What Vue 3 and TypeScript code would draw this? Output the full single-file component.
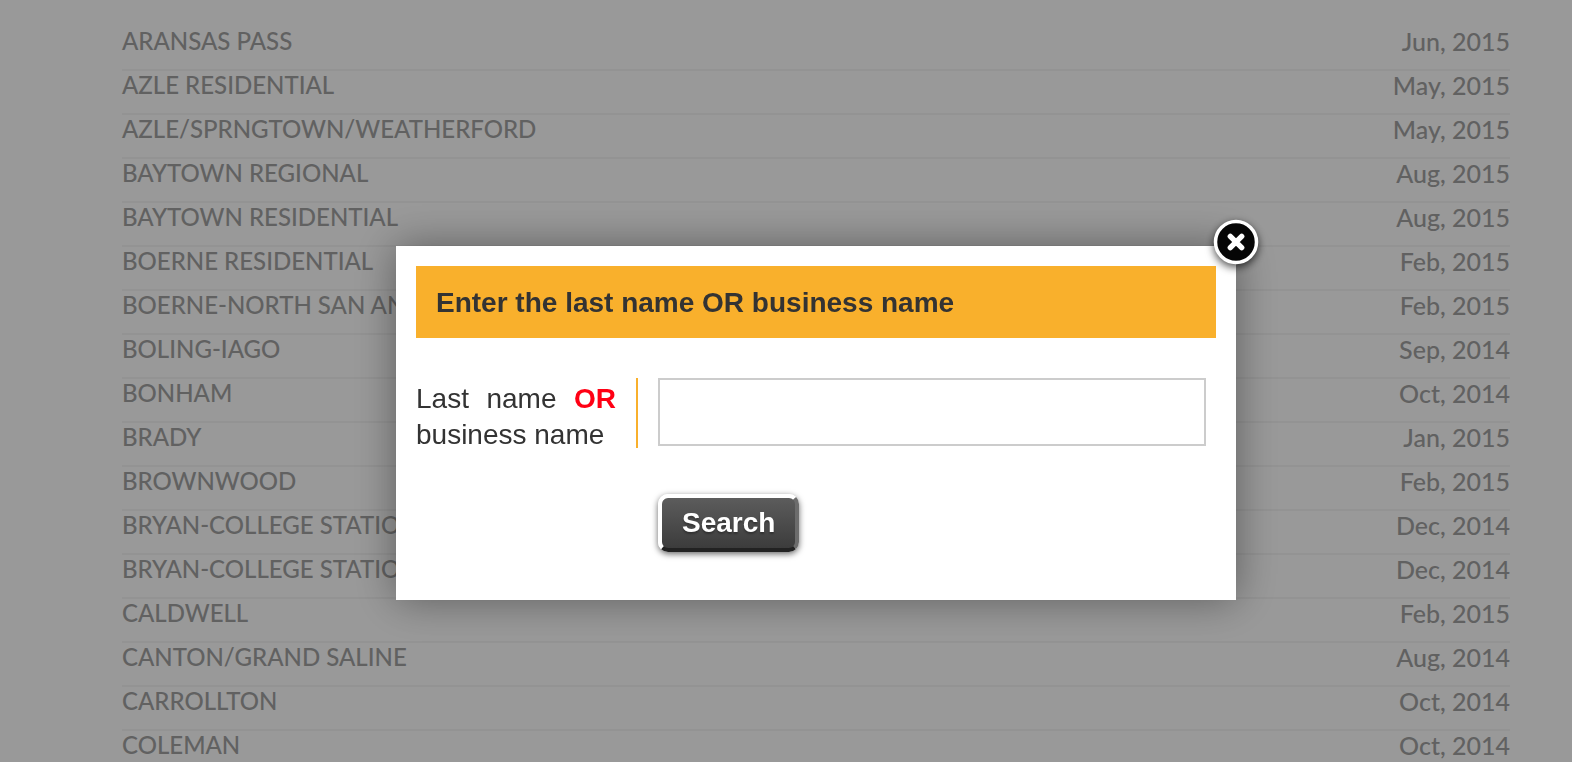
<script setup lang="ts">
import { ref } from 'vue'

interface Directory {
  name: string
  issued: string
}

const directories: Directory[] = [
  { name: 'ARANSAS PASS', issued: 'Jun, 2015' },
  { name: 'AZLE RESIDENTIAL', issued: 'May, 2015' },
  { name: 'AZLE/SPRNGTOWN/WEATHERFORD', issued: 'May, 2015' },
  { name: 'BAYTOWN REGIONAL', issued: 'Aug, 2015' },
  { name: 'BAYTOWN RESIDENTIAL', issued: 'Aug, 2015' },
  { name: 'BOERNE RESIDENTIAL', issued: 'Feb, 2015' },
  { name: 'BOERNE-NORTH SAN AN', issued: 'Feb, 2015' },
  { name: 'BOLING-IAGO', issued: 'Sep, 2014' },
  { name: 'BONHAM', issued: 'Oct, 2014' },
  { name: 'BRADY', issued: 'Jan, 2015' },
  { name: 'BROWNWOOD', issued: 'Feb, 2015' },
  { name: 'BRYAN-COLLEGE STATIO', issued: 'Dec, 2014' },
  { name: 'BRYAN-COLLEGE STATIO', issued: 'Dec, 2014' },
  { name: 'CALDWELL', issued: 'Feb, 2015' },
  { name: 'CANTON/GRAND SALINE', issued: 'Aug, 2014' },
  { name: 'CARROLLTON', issued: 'Oct, 2014' },
  { name: 'COLEMAN', issued: 'Oct, 2014' },
]

const open = ref(true)
const query = ref('')
</script>

<template>
  <div class="page">
    <main class="content">
      <table class="directories">
        <tbody>
          <tr v-for="(item, i) in directories" :key="i">
            <td class="name">{{ item.name }}</td>
            <td class="issued">{{ item.issued }}</td>
          </tr>
        </tbody>
      </table>
    </main>

    <div v-if="open" class="overlay">
      <section class="modal" role="dialog" aria-modal="true" aria-labelledby="modal-title">
        <h2 id="modal-title" class="title">Enter the last name OR business name</h2>
        <form class="form" @submit.prevent>
          <label class="label" for="query">Last name <strong>OR</strong> business name</label>
          <div class="fields">
            <input id="query" v-model="query" class="query" type="text" />
            <button class="search" type="submit">Search</button>
          </div>
        </form>
        <button class="close" type="button" aria-label="Close" @click="open = false">
          <svg viewBox="0 0 48 48" width="48" height="48" aria-hidden="true">
            <circle cx="24" cy="24" r="20.5" fill="#060606" stroke="#fff" stroke-width="3.5" />
            <path d="M18.3 18.3L29.7 29.7M29.7 18.3L18.3 29.7" stroke="#fff" stroke-width="5.4" stroke-linecap="round" />
          </svg>
        </button>
      </section>
    </div>
  </div>
</template>

<style>
body {
  margin: 0;
}
</style>

<style scoped>
.page {
  height: 100vh;
  overflow: hidden;
  background: #fff;
}

.content {
  padding: 27px 62px 0 122px;
}

.directories {
  width: 100%;
  border-collapse: separate;
  border-spacing: 0;
  font-family: 'Trebuchet MS', Lato, sans-serif;
  font-weight: 500;
  line-height: 28px;
  color: #a2a2a2;
}

.directories td {
  padding: 0 0 14px;
  border-bottom: 2px solid #f5f5f5;
}

.directories .name {
  font-size: 24px;
}

.directories .issued {
  font-size: 25px;
  text-align: right;
}

.overlay {
  position: fixed;
  inset: 0;
  display: flex;
  align-items: flex-start;
  justify-content: center;
  padding: 246px 62px 0 122px;
  background: rgba(0, 0, 0, 0.4);
}

.modal {
  position: relative;
  box-sizing: border-box;
  width: 840px;
  max-width: 100%;
  padding: 20px 20px 48px;
  background: #fff;
  box-shadow: 0 0 40px rgba(0, 0, 0, 0.4);
  font-family: Arial, 'Liberation Sans', sans-serif;
  font-size: 28px;
  line-height: 36px;
  color: #333;
}

.title {
  margin: 0;
  padding: 19px 20px 17px;
  background: #f9b02c;
  font-size: 28px;
  font-weight: 700;
}

.form {
  display: flex;
  align-items: flex-start;
  margin-top: 40px;
}

.label {
  box-sizing: border-box;
  width: 222px;
  height: 70px;
  padding: 3px 20px 0 0;
  border-right: 2px solid #f9b02c;
  text-align: justify;
}

.label strong {
  color: #ff0014;
}

.fields {
  flex: 1;
  display: flex;
  flex-direction: column;
  align-items: flex-start;
  gap: 48px;
  padding: 0 10px 0 20px;
}

.query {
  box-sizing: border-box;
  width: 100%;
  height: 68px;
  padding: 0 16px;
  border: 2px solid #ccc;
  background: #fff;
  font: inherit;
  color: inherit;
  outline: none;
}

.search {
  box-sizing: border-box;
  height: 58px;
  padding: 0 20px;
  border: 4px solid;
  border-color: #fff #6c6c6c #222 #fff;
  border-radius: 10px;
  background: linear-gradient(#5c5c5c, #3c3c3c);
  box-shadow: 0 2px 6px rgba(0, 0, 0, 0.6);
  font: inherit;
  font-weight: 700;
  color: #fff;
  text-shadow: 0 2px 2px rgba(0, 0, 0, 0.3);
  cursor: pointer;
}

.close {
  position: absolute;
  top: -28px;
  right: -24px;
  width: 48px;
  height: 48px;
  padding: 0;
  border: 0;
  background: none;
  cursor: pointer;
}

.close svg {
  display: block;
  filter: drop-shadow(0 3px 4px rgba(0, 0, 0, 0.7));
}
</style>
